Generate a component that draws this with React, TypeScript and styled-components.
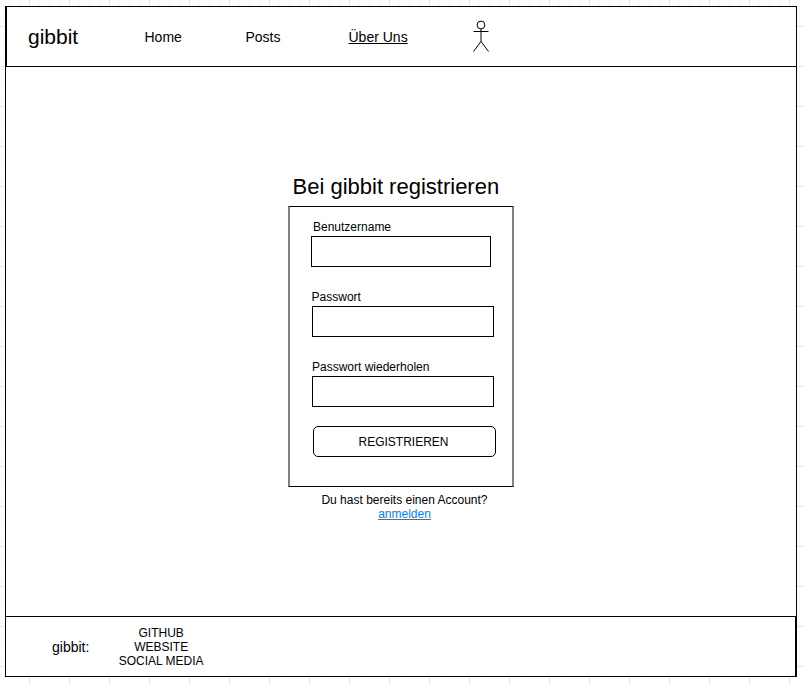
import React from "react";
import styled, { createGlobalStyle } from "styled-components";

const GlobalStyle = createGlobalStyle`
  * { box-sizing: border-box; }
  html, body { margin: 0; height: 100%; overflow: hidden; }
  body {
    font-family: "Liberation Sans", Arial, sans-serif;
    font-size: 12px;
    line-height: 14px;
    color: #000;
    background-color: #fff;
  }
`;

const Canvas = styled.div`
  width: 803px;
  height: 684px;
  padding: 6px 6px 7px 5px;
  background-color: #fff;
  background-image:
    linear-gradient(to right, #e5e5e5 1px, transparent 1px),
    linear-gradient(to bottom, #e5e5e5 1px, transparent 1px),
    linear-gradient(to right, #f8f8f8 1px, transparent 1px),
    linear-gradient(to bottom, #f8f8f8 1px, transparent 1px);
  background-size: 40px 40px, 40px 40px, 10px 10px, 10px 10px;
  background-position: 29px 0, 0 26px, 9px 0, 0 6px;
`;

const Page = styled.div`
  display: flex;
  flex-direction: column;
  width: 792px;
  height: 671px;
  border: 1px solid #000;
  background: #fff;
`;

const Header = styled.header`
  display: flex;
  align-items: center;
  height: 60px;
  padding-left: 21px;
  border-left: 1px solid #000;
  border-bottom: 1px solid #000;
`;

const Brand = styled.div`
  width: 116.5px;
  font-size: 21px;
  line-height: 24px;
  white-space: nowrap;
`;

const NavItem = styled.a<{ $width: number; $underlined?: boolean }>`
  width: ${(p) => p.$width}px;
  font-size: 14px;
  line-height: 16px;
  white-space: nowrap;
  text-decoration: ${(p) => (p.$underlined ? "underline" : "none")};
`;

const UserIcon = styled.svg`
  display: block;
  width: 18px;
  height: 33px;
`;

const Main = styled.main`
  display: flex;
  flex-direction: column;
  align-items: flex-start;
  height: 549px;
  padding: 107px 0 0 282px;
`;

const Title = styled.h1`
  margin: 0 0 6px 4.5px;
  font-size: 22px;
  line-height: 26px;
  font-weight: 400;
  white-space: nowrap;
`;

const Panel = styled.form`
  display: flex;
  flex-direction: column;
  align-items: flex-start;
  width: 226px;
  height: 281px;
  padding: 13px 0 0 21px;
  border: solid;
  border-width: 1px 2px;
  border-color: #000 #808080;
`;

const Field = styled.label`
  display: flex;
  flex-direction: column;
  height: 70px;
`;

const Caption = styled.span<{ $indent: number }>`
  height: 16px;
  padding-left: ${(p) => p.$indent}px;
  white-space: nowrap;
`;

const Input = styled.input<{ $width: number; $offset: number }>`
  width: ${(p) => p.$width}px;
  height: 31px;
  margin: 0 0 0 ${(p) => p.$offset}px;
  padding: 0 6px;
  border: 1px solid #000;
  border-radius: 0;
  outline: none;
  background: #fff;
  font: inherit;
`;

const Submit = styled.button`
  width: 183px;
  height: 31px;
  margin: -4px 0 0 2px;
  padding: 0 2px 0 0;
  border: 1px solid #000;
  border-radius: 5px;
  background: #fff;
  color: #000;
  font: inherit;
`;

const Hint = styled.p`
  width: 226px;
  margin: 6px 0 0 3px;
  padding-left: 1px;
  text-align: center;
`;

const Login = styled.a`
  color: #007fff;
  text-decoration: underline;
`;

const Footer = styled.footer`
  display: flex;
  align-items: center;
  height: 60px;
  padding-left: 46px;
  border-top: 1px solid #000;
  border-right: 1px solid #000;
`;

const FooterBrand = styled.div`
  width: 66.7px;
  font-size: 14px;
  line-height: 16px;
`;

const FooterLinks = styled.div`
  display: flex;
  flex-direction: column;
  align-items: center;
  white-space: nowrap;
`;

const navigation = [
  { label: "Home", width: 101 },
  { label: "Posts", width: 103 },
  { label: "Über Uns", width: 123.5, underlined: true },
];

const fields = [
  { label: "Benutzername", type: "text", indent: 2, offset: 0, width: 180 },
  { label: "Passwort", type: "password", indent: 0.6, offset: 1, width: 182 },
  { label: "Passwort wiederholen", type: "password", indent: 1, offset: 1, width: 182 },
];

export default function App() {
  return (
    <>
      <GlobalStyle />
      <Canvas>
        <Page>
          <Header>
            <Brand>gibbit</Brand>
            {navigation.map((item) => (
              <NavItem key={item.label} $width={item.width} $underlined={item.underlined}>
                {item.label}
              </NavItem>
            ))}
            <UserIcon viewBox="0 0 18 33" fill="none" stroke="#000">
              <circle cx="9" cy="5" r="3.9" />
              <path d="M9 9v12.5M1.5 11.5h15M9 21.5l-7.5 10M9 21.5l7.5 10" />
            </UserIcon>
          </Header>
          <Main>
            <Title>Bei gibbit registrieren</Title>
            <Panel>
              {fields.map((f) => (
                <Field key={f.label}>
                  <Caption $indent={f.indent}>{f.label}</Caption>
                  <Input type={f.type} $width={f.width} $offset={f.offset} />
                </Field>
              ))}
              <Submit type="button">REGISTRIEREN</Submit>
            </Panel>
            <Hint>
              Du hast bereits einen Account?
              <br />
              <Login>anmelden</Login>
            </Hint>
          </Main>
          <Footer>
            <FooterBrand>gibbit:</FooterBrand>
            <FooterLinks>
              <span>GITHUB</span>
              <span>WEBSITE</span>
              <span>SOCIAL MEDIA</span>
            </FooterLinks>
          </Footer>
        </Page>
      </Canvas>
    </>
  );
}
